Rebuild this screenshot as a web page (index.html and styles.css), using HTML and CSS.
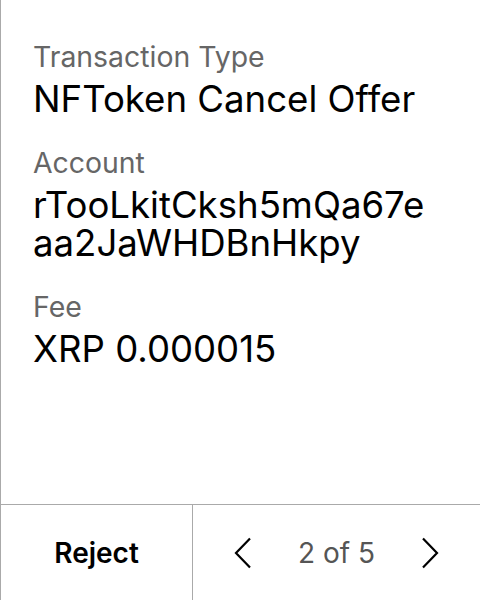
FILE: index.html
```html
<!DOCTYPE html>
<html>
<head>
<meta charset="utf-8">
<link rel="stylesheet" href="styles.css">
</head>
<body>
<div class="screen">
  <div class="details">
    <div class="field">
      <div class="label">Transaction Type</div>
      <div class="value">NFToken Cancel Offer</div>
    </div>
    <div class="field">
      <div class="label">Account</div>
      <div class="value break">rTooLkitCksh5mQa67eaa2JaWHDBnHkpy</div>
    </div>
    <div class="field">
      <div class="label">Fee</div>
      <div class="value">XRP 0.000015</div>
    </div>
  </div>
  <div class="footer">
    <div class="reject">Reject</div>
    <div class="pager">
      <svg class="chev" width="18" height="32" viewBox="0 0 18 32"><path d="M16 1.5 L2 16 L16 30.5" fill="none" stroke="#000" stroke-width="2.2"/></svg>
      <span class="count">2 of 5</span>
      <svg class="chev" width="18" height="32" viewBox="0 0 18 32"><path d="M2 1.5 L16 16 L2 30.5" fill="none" stroke="#000" stroke-width="2.2"/></svg>
    </div>
  </div>
</div>
</body>
</html>
```

FILE: styles.css
```css
html, body {
  margin: 0;
  padding: 0;
  background: #fff;
}
body {
  font-family: Inter, "Noto Sans", sans-serif;
  color: #000;
}
.screen {
  width: 480px;
  height: 600px;
  box-sizing: border-box;
  border-left: 1px solid #aaa;
  display: flex;
  flex-direction: column;
}
.details {
  flex: 1;
  padding: 40px 40px 0 32px;
  display: flex;
  flex-direction: column;
  gap: 28px;
}
.label {
  font-size: 28.4px;
  line-height: 34px;
  color: #666;
}
.value {
  font-size: 36.6px;
  line-height: 38px;
  margin-top: 6px;
}
.break {
  word-break: break-all;
}
.footer {
  height: 96px;
  box-sizing: border-box;
  border-top: 1px solid #aaa;
  display: grid;
  grid-template-columns: 192px 1fr;
}
.reject {
  border-right: 1px solid #aaa;
  display: flex;
  align-items: center;
  justify-content: center;
  font-size: 28px;
  font-weight: 600;
}
.pager {
  display: flex;
  align-items: center;
  justify-content: space-between;
  padding: 0 41px 0 41px;
}
.count {
  font-size: 28px;
  color: #555;
}
.chev {
  display: block;
}
```
